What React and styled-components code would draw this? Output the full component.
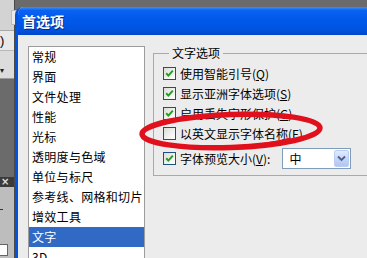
import React from "react";
import styled, { createGlobalStyle } from "styled-components";

const GlobalStyle = createGlobalStyle`
  html, body { margin: 0; padding: 0; }
  body {
    width: 367px;
    height: 258px;
    overflow: hidden;
    font-family: "Noto Sans CJK SC", "Noto Sans", sans-serif;
    font-size: 12px;
    color: #000;
  }
  * { box-sizing: border-box; }
`;

const Screen = styled.div`
  position: relative;
  display: flex;
  width: 367px;
  height: 258px;
  overflow: hidden;
  background: #6b6b6b;
`;

const LeftStrip = styled.div`
  flex: none;
  width: 15px;
  display: flex;
  flex-direction: column;
  border-right: 1px solid #4a4a4a;
`;

const TopArea = styled.div`
  height: 31px;
  background: #d3d3d3;
  border-bottom: 1px solid #a8a8a8;
  padding: 10px 0 0 11px;
`;

const SmallBox = styled.div`
  width: 6px;
  height: 15px;
  background: #ebebeb;
  border: 1px solid #bdbdbd;
  border-right: none;
`;

const ParenRow = styled.div`
  height: 20px;
  background: #e8e8e8;
  border-bottom: 1px solid #b8b8b8;
  font-family: "Liberation Sans", sans-serif;
  font-size: 13px;
  line-height: 19px;
`;

const ArrowRow = styled.div`
  height: 28px;
  background: #dcdcdc;
  border-bottom: 1px solid #9a9a9a;
  font-size: 8px;
  line-height: 8px;
  padding-top: 15px;
  color: #222;
`;

const DarkArea = styled.div`
  flex: 1;
  background: #6b6b6b;
`;

const PanelHead = styled.div`
  height: 10px;
  background: #3a3a3a;
  color: #e0e0e0;
  font-family: "DejaVu Sans", sans-serif;
  font-size: 10px;
  font-weight: bold;
  line-height: 10px;
  padding-left: 1px;
`;

const PanelBody = styled.div`
  height: 71px;
  background: #bdbdbd;
  display: flex;
  flex-direction: column;
  justify-content: space-between;
  padding: 22px 0 2px 0;
`;

const PanelMark = styled.div`
  width: ${(p) => p.$w}px;
  height: ${(p) => p.$h}px;
  background: ${(p) => p.$bg};
  border: ${(p) => (p.$border ? "1px solid #666" : "none")};
  border-left: none;
`;

const Dialog = styled.div`
  flex: none;
  width: 360px;
  margin-top: 7px;
  display: flex;
  flex-direction: column;
  background: #ececec;
  border-left: 3px solid #0052e0;
  border-top-left-radius: 8px;
  overflow: hidden;
`;

const TitleBar = styled.div`
  height: 28px;
  flex: none;
  display: flex;
  align-items: center;
  padding-left: 4px;
  background: linear-gradient(
    to bottom,
    #3d8ff7 0%,
    #0b62f2 12%,
    #0059ea 45%,
    #0053e0 80%,
    #0046cc 100%
  );
  color: #fff;
  font-size: 14px;
  font-weight: bold;
  text-shadow: 1px 1px 0 #0a2a8a;
`;

const Body = styled.div`
  flex: 1;
  display: flex;
  align-items: flex-start;
  gap: 8px;
  padding: 11px 0 0 10px;
`;

const ListBox = styled.ul`
  flex: none;
  width: 117px;
  height: 240px;
  margin: 0;
  padding: 0;
  list-style: none;
  background: #fff;
  border: 1px solid #9c9c9c;
`;

const ListItem = styled.li`
  height: 20px;
  line-height: 20px;
  padding-left: 3px;
  white-space: nowrap;
  letter-spacing: 0.3px;
  background: ${(p) => (p.$selected ? "#316ac5" : "transparent")};
  color: ${(p) => (p.$selected ? "#fff" : "#000")};
`;

const GroupBox = styled.fieldset`
  flex: none;
  width: 240px;
  margin: 0;
  padding: 3px 0 6px 9px;
  border: 1px solid #a9a9a9;
  display: flex;
  flex-direction: column;
  align-items: flex-start;
`;

const Legend = styled.legend`
  margin-left: 6px;
  padding: 0 3px;
  font-size: 12px;
  line-height: 14px;
`;

const Row = styled.div`
  display: flex;
  align-items: center;
  height: ${(p) => (p.$tall ? 22 : 20)}px;
  margin-top: ${(p) => (p.$tall ? 4 : 0)}px;
  white-space: nowrap;
`;

const RowText = styled.span`
  flex: none;
  margin-left: 4px;
`;

const Box = styled.span`
  flex: none;
  width: 13px;
  height: 13px;
  border: 1px solid #1c5180;
  background: linear-gradient(135deg, #dcdcd7 0%, #f6f6f4 70%, #ffffff 100%);
  display: flex;
  align-items: center;
  justify-content: center;
`;

const Combo = styled.div`
  flex: none;
  margin-left: 12px;
  width: 69px;
  height: 21px;
  border: 1px solid #7f9db9;
  background: #fff;
  display: flex;
  align-items: center;
  padding: 1px;
`;

const ComboText = styled.span`
  flex: 1;
  padding-left: 5px;
  font-size: 12px;
`;

const ComboButton = styled.span`
  flex: none;
  width: 15px;
  height: 17px;
  border: 1px solid #bccdf3;
  border-radius: 2px;
  background: linear-gradient(to bottom, #e3ebfd 0%, #c6d6fb 50%, #b2c6f4 100%);
  display: flex;
  align-items: center;
  justify-content: center;
`;

const Overlay = styled.svg`
  position: absolute;
  left: 0;
  top: 0;
  width: 367px;
  height: 258px;
  pointer-events: none;
`;

const Check = () => (
  <svg width="9" height="9" viewBox="0 0 9 9">
    <path d="M1.2 4.2 L3.4 6.6 L7.8 1.6" fill="none" stroke="#21a121" strokeWidth="2" />
  </svg>
);

const CheckBox = ({ checked }) => <Box>{checked ? <Check /> : null}</Box>;

const items = [
  "常规",
  "界面",
  "文件处理",
  "性能",
  "光标",
  "透明度与色域",
  "单位与标尺",
  "参考线、网格和切片",
  "增效工具",
  "文字",
  "3D",
];

const options = [
  { text: "使用智能引号", key: "Q", checked: true },
  { text: "显示亚洲字体选项", key: "S", checked: true },
  { text: "启用丢失字形保护", key: "G", checked: true },
  { text: "以英文显示字体名称", key: "F", checked: false },
];

export default function App() {
  return (
    <>
      <GlobalStyle />
      <Screen>
        <LeftStrip>
          <TopArea>
            <SmallBox />
          </TopArea>
          <ParenRow>)</ParenRow>
          <ArrowRow>▾</ArrowRow>
          <DarkArea />
          <PanelHead>×</PanelHead>
          <PanelBody>
            <PanelMark $w={3} $h={1} $bg="#333" />
            <PanelMark $w={8} $h={12} $bg="#fff" $border />
          </PanelBody>
        </LeftStrip>
        <Dialog>
          <TitleBar>首选项</TitleBar>
          <Body>
            <ListBox>
              {items.map((it) => (
                <ListItem key={it} $selected={it === "文字"}>
                  {it}
                </ListItem>
              ))}
            </ListBox>
            <GroupBox>
              <Legend>文字选项</Legend>
              {options.map((o) => (
                <Row key={o.key}>
                  <CheckBox checked={o.checked} />
                  <RowText>
                    {o.text}(<u>{o.key}</u>)
                  </RowText>
                </Row>
              ))}
              <Row $tall>
                <CheckBox checked />
                <RowText>
                  字体预览大小(<u>V</u>):
                </RowText>
                <Combo>
                  <ComboText>中</ComboText>
                  <ComboButton>
                    <svg width="9" height="7" viewBox="0 0 9 7">
                      <path d="M1 1.5 L4.5 5 L8 1.5" fill="none" stroke="#4d6185" strokeWidth="1.8" />
                    </svg>
                  </ComboButton>
                </Combo>
              </Row>
            </GroupBox>
          </Body>
        </Dialog>
        <Overlay viewBox="0 0 367 258">
          <ellipse
            cx="231"
            cy="131"
            rx="89"
            ry="16.5"
            transform="rotate(-2 231 131)"
            fill="none"
            stroke="#e0101c"
            strokeWidth="5.5"
          />
          <path
            d="M146 139 Q175 149 225 148 Q265 146 290 139"
            fill="none"
            stroke="#e0101c"
            strokeWidth="3"
          />
        </Overlay>
      </Screen>
    </>
  );
}
